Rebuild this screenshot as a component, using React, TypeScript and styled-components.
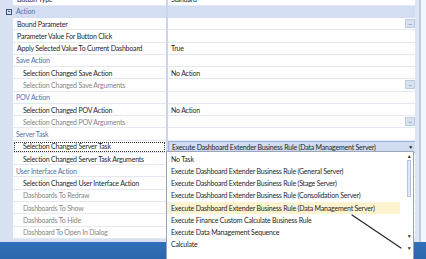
import React from "react";
import styled, { createGlobalStyle, css } from "styled-components";

const GlobalStyle = createGlobalStyle`
  html, body { margin: 0; padding: 0; overflow: hidden; background: #ffffff; }
  * { box-sizing: border-box; }
`;

const ROW_H = 12.28;
const ITEM_H = 12.14;

const Screen = styled.div`
  position: relative;
  width: 426px;
  height: 259px;
  overflow: hidden;
  display: flex;
  flex-direction: column;
  font-family: Lato, "Open Sans", sans-serif;
  font-size: 7px;
  letter-spacing: -0.2px;
  color: #1f1f1f;
`;

const GridArea = styled.div`
  flex: 1;
  display: flex;
  min-height: 0;
`;

const GridBody = styled.div`
  flex: 1;
  overflow: hidden;
  background: #d7e1f2;
  display: flex;
  flex-direction: column;
`;

const RowList = styled.div`
  margin-top: -6.5px;
  display: flex;
  flex-direction: column;
`;

const Row = styled.div<{ $band?: boolean }>`
  display: flex;
  height: ${ROW_H}px;
  background: ${(p) => (p.$band ? "#d3def2" : "#ffffff")};
`;

const Gutter = styled.div`
  width: 13px;
  flex-shrink: 0;
  background: #d8e2f3;
  display: flex;
  align-items: center;
  justify-content: flex-end;
  padding-right: 1px;
`;

const Collapse = styled.span`
  position: relative;
  width: 6px;
  height: 6px;
  border: 1px solid #3d4f72;
  background: transparent;
  &::after {
    content: "";
    position: absolute;
    left: 1px;
    right: 1px;
    top: 1.5px;
    height: 1px;
    background: #3d4f72;
  }
`;

type Tone = "normal" | "category" | "disabled";

const toneColor: Record<Tone, string> = {
  normal: "#1f1f1f",
  category: "#5272a8",
  disabled: "#858585",
};

const NameCell = styled.div<{ $indent: number; $tone: Tone; $focused?: boolean; $band?: boolean }>`
  width: 153px;
  flex-shrink: 0;
  display: flex;
  align-items: center;
  padding-left: ${(p) => p.$indent}px;
  white-space: nowrap;
  overflow: hidden;
  color: ${(p) => toneColor[p.$tone]};
  border-bottom: 1px solid ${(p) => (p.$band ? "#d3def2" : "#e4e9f1")};
  ${(p) =>
    p.$focused &&
    css`
      outline: 1px dotted #333;
      outline-offset: -2px;
    `}
`;

const Divider = styled.div`
  width: 2px;
  flex-shrink: 0;
  background: #c9d6ec;
`;

const ValueCell = styled.div<{ $band?: boolean; $editor?: boolean }>`
  width: 249px;
  flex-shrink: 0;
  display: flex;
  align-items: center;
  justify-content: space-between;
  padding: 0 2px 0 3px;
  white-space: nowrap;
  overflow: hidden;
  border-bottom: 1px solid ${(p) => (p.$band ? "#d3def2" : "#e4e9f1")};
  ${(p) =>
    p.$editor &&
    css`
      background: #d0dcf1;
      border: 1px solid #9fb5dd;
      padding-left: 3px;
      padding-right: 3px;
    `}
`;

const EllipsisButton = styled.span`
  width: 10px;
  height: 9px;
  background: #d8e1f0;
  border: 1px solid #bccae2;
  font-size: 5px;
  line-height: 5px;
  color: #4a5a78;
  display: flex;
  align-items: center;
  justify-content: center;
  letter-spacing: -0.3px;
`;

const ComboArrow = styled.span`
  font-size: 5px;
  color: #222;
`;

const RightRail = styled.div`
  width: 11px;
  flex-shrink: 0;
  background: linear-gradient(
    to right,
    #dde6f4 0px,
    #dde6f4 4px,
    #bfcde6 4px,
    #bfcde6 6px,
    #f3f6fb 6px
  );
`;

const StatusBar = styled.div`
  height: 17px;
  flex-shrink: 0;
  background: linear-gradient(#3170b9, #2a66ae);
`;

const Dropdown = styled.div`
  position: absolute;
  left: 166px;
  top: 151px;
  width: 248px;
  height: 112px;
  background: #ffffff;
  border: 1px solid #9aa6b8;
  display: flex;
`;

const DropList = styled.div`
  flex: 1;
  padding-top: 1px;
  display: flex;
  flex-direction: column;
`;

const DropItem = styled.div<{ $hot?: boolean }>`
  height: ${ITEM_H}px;
  display: flex;
  align-items: center;
  padding-left: 4px;
  margin-right: 5px;
  white-space: nowrap;
  background: ${(p) => (p.$hot ? "#fdf3cf" : "transparent")};
`;

const DropScroll = styled.div`
  width: 8px;
  flex-shrink: 0;
  display: flex;
  flex-direction: column;
  align-items: center;
  padding-top: 1px;
`;

const ScrollArrow = styled.span<{ $gap?: number }>`
  font-size: 5px;
  line-height: 6px;
  color: #333;
  height: 6px;
  flex-shrink: 0;
  margin-top: ${(p) => p.$gap ?? 0}px;
`;

const ScrollTrack = styled.div`
  height: 74px;
  flex-shrink: 0;
  width: 100%;
  display: flex;
  justify-content: center;
`;

const ScrollThumb = styled.div`
  margin-top: 1px;
  width: 4px;
  height: 37px;
  background: #dfe7f4;
  border: 1px solid #b5c5e1;
`;

const Annotation = styled.svg`
  position: absolute;
  left: 0;
  top: 0;
  pointer-events: none;
`;

type RowDef = {
  name: string;
  kind: "top" | "cat" | "prop";
  level?: 1 | 2;
  value?: string;
  disabled?: boolean;
  button?: boolean;
  editor?: boolean;
};

const rows: RowDef[] = [
  { name: "Button Type", kind: "prop", level: 1, value: "Standard" },
  { name: "Action", kind: "top" },
  { name: "Bound Parameter", kind: "prop", level: 1, button: true },
  { name: "Parameter Value For Button Click", kind: "prop", level: 1 },
  { name: "Apply Selected Value To Current Dashboard", kind: "prop", level: 1, value: "True" },
  { name: "Save Action", kind: "cat" },
  { name: "Selection Changed Save Action", kind: "prop", level: 2, value: "No Action" },
  { name: "Selection Changed Save Arguments", kind: "prop", level: 2, disabled: true, button: true },
  { name: "POV Action", kind: "cat" },
  { name: "Selection Changed POV Action", kind: "prop", level: 2, value: "No Action" },
  { name: "Selection Changed POV Arguments", kind: "prop", level: 2, disabled: true, button: true },
  { name: "Server Task", kind: "cat" },
  {
    name: "Selection Changed Server Task",
    kind: "prop",
    level: 2,
    editor: true,
    value: "Execute Dashboard Extender Business Rule (Data Management Server)",
  },
  { name: "Selection Changed Server Task Arguments", kind: "prop", level: 2 },
  { name: "User Interface Action", kind: "cat" },
  { name: "Selection Changed User Interface Action", kind: "prop", level: 2 },
  { name: "Dashboards To Redraw", kind: "prop", level: 2, disabled: true },
  { name: "Dashboards To Show", kind: "prop", level: 2, disabled: true },
  { name: "Dashboards To Hide", kind: "prop", level: 2, disabled: true },
  { name: "Dashboard To Open In Dialog", kind: "prop", level: 2, disabled: true },
];

const options = [
  "No Task",
  "Execute Dashboard Extender Business Rule (General Server)",
  "Execute Dashboard Extender Business Rule (Stage Server)",
  "Execute Dashboard Extender Business Rule (Consolidation Server)",
  "Execute Dashboard Extender Business Rule (Data Management Server)",
  "Execute Finance Custom Calculate Business Rule",
  "Execute Data Management Sequence",
  "Calculate",
];

function PropRow({ row }: { row: RowDef }) {
  const band = row.kind === "top";
  const indent = row.kind === "top" ? 3 : row.kind === "cat" ? 3 : row.level === 1 ? 4 : 10;
  const tone: Tone = row.kind !== "prop" ? "category" : row.disabled ? "disabled" : "normal";
  return (
    <Row $band={band}>
      <Gutter>{band && <Collapse />}</Gutter>
      <NameCell $indent={indent} $tone={tone} $focused={row.editor} $band={band}>
        {row.name}
      </NameCell>
      <Divider />
      <ValueCell $band={band} $editor={row.editor}>
        <span>{row.value ?? ""}</span>
        {row.button && <EllipsisButton>...</EllipsisButton>}
        {row.editor && <ComboArrow>▼</ComboArrow>}
      </ValueCell>
    </Row>
  );
}

export default function App() {
  return (
    <>
      <GlobalStyle />
      <Screen>
        <GridArea>
          <GridBody>
            <RowList>
              {rows.map((r) => (
                <PropRow key={r.name} row={r} />
              ))}
            </RowList>
          </GridBody>
          <RightRail />
        </GridArea>
        <StatusBar />
        <Dropdown>
          <DropList>
            {options.map((o, i) => (
              <DropItem key={o} $hot={i === 4}>
                {o}
              </DropItem>
            ))}
          </DropList>
          <DropScroll>
            <ScrollArrow>▲</ScrollArrow>
            <ScrollTrack>
              <ScrollThumb />
            </ScrollTrack>
            <ScrollArrow>▼</ScrollArrow>
            <ScrollArrow $gap={6}>▼</ScrollArrow>
          </DropScroll>
        </Dropdown>
        <Annotation width="426" height="259" viewBox="0 0 426 259">
          <line x1="352" y1="215" x2="401" y2="248" stroke="#262626" strokeWidth="1.2" strokeLinecap="round" />
        </Annotation>
      </Screen>
    </>
  );
}
